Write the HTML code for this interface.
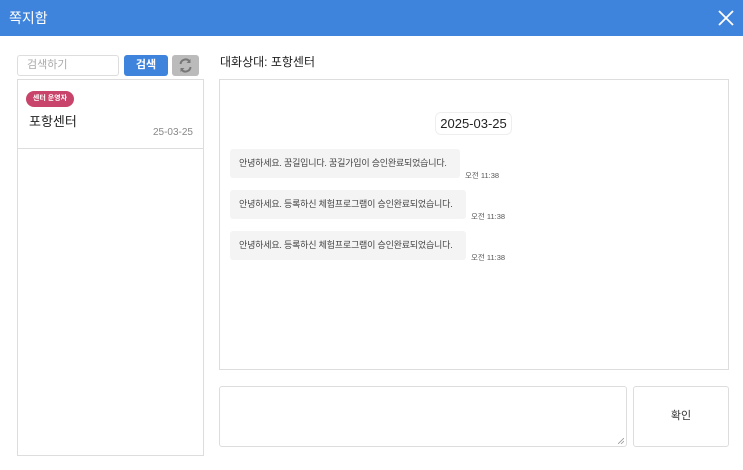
<!DOCTYPE html>
<html><head><meta charset="utf-8"><style>
*{box-sizing:border-box;margin:0;padding:0}
body{width:743px;height:470px;background:#fff;font-family:"Liberation Sans","Noto Sans CJK KR",sans-serif;position:relative;overflow:hidden;color:#333}
.hdr{position:absolute;left:0;top:0;width:743px;height:36px;background:#3f84dc;color:#fff;font-size:14px;line-height:36px;padding-left:9px}
.x{position:absolute;right:9px;top:10px;width:16px;height:16px}
.abs{position:absolute;white-space:nowrap}
.inp{left:17px;top:55px;width:102px;height:21px;border:1px solid #ddd;border-radius:3px;font-size:11px;color:#aaa;padding-left:9px;line-height:19px}
.btn{left:124px;top:55px;width:44px;height:21px;background:#3f84dc;border-radius:3px;color:#fff;font-size:11px;text-align:center;line-height:21px;font-weight:bold}
.ref{left:172px;top:55px;width:27px;height:21px;background:#bbb;border-radius:3px}
.list{left:17px;top:79px;width:187px;height:377px;border:1px solid #ddd}
.item{position:absolute;left:0;top:0;width:185px;height:69px;border-bottom:1px solid #ddd}
.badge{position:absolute;left:8px;top:11px;width:48px;height:16px;background:#c9446a;border-radius:8px;color:#fff;font-size:7px;font-weight:bold;text-align:center;line-height:16px}
.name{position:absolute;left:11px;top:31px;font-size:13px;color:#222}
.dt{position:absolute;right:10px;top:47px;font-size:10px;color:#888}
.lbl{left:220px;top:53px;font-size:12px;color:#222}
.chat{left:219px;top:79px;width:510px;height:291px;border:1px solid #ddd}
.pill{left:435px;top:112px;width:77px;height:23px;border:1px solid #eee;border-radius:6px;font-size:13px;text-align:center;line-height:21px;color:#222}
.bub{left:230px;height:29px;background:#f4f4f4;border-radius:3px;font-size:9px;color:#444;line-height:29px;padding-left:9px;letter-spacing:-0.2px}
.tm{font-size:7.5px;color:#555}
.ta{left:219px;top:386px;width:408px;height:61px;border:1px solid #ddd;border-radius:3px}
.ok{left:633px;top:386px;width:96px;height:61px;border:1px solid #ddd;border-radius:3px;font-size:11px;text-align:center;line-height:59px;color:#333}
</style></head><body>
<div class="hdr">쪽지함<svg class="x" viewBox="0 0 16 16"><path d="M1 1L15 15M15 1L1 15" stroke="#fff" stroke-width="1.8"/></svg></div>
<div class="abs inp">검색하기</div>
<div class="abs btn">검색</div>
<div class="abs ref"><svg width="27" height="21" viewBox="0 0 27 21"><path d="M8.5 9a5 5 0 0 1 9-2.5M18.5 12a5 5 0 0 1-9 2.5" stroke="#777" stroke-width="2" fill="none"/><path d="M18.5 4v4h-4zM8.5 17v-4h4z" fill="#777"/></svg></div>
<div class="abs list"><div class="item"><div class="badge">센터 운영자</div><div class="name">포항센터</div><div class="dt">25-03-25</div></div></div>
<div class="abs lbl">대화상대: 포항센터</div>
<div class="abs chat"></div>
<div class="abs pill">2025-03-25</div>
<div class="abs bub" style="top:149px;width:230px">안녕하세요. 꿈길입니다. 꿈길가입이 승인완료되었습니다.</div>
<div class="abs tm" style="left:465px;top:170px">오전 11:38</div>
<div class="abs bub" style="top:190px;width:236px">안녕하세요. 등록하신 체험프로그램이 승인완료되었습니다.</div>
<div class="abs tm" style="left:471px;top:211px">오전 11:38</div>
<div class="abs bub" style="top:231px;width:236px">안녕하세요. 등록하신 체험프로그램이 승인완료되었습니다.</div>
<div class="abs tm" style="left:471px;top:252px">오전 11:38</div>
<div class="abs ta"><svg style="position:absolute;right:2px;bottom:2px" width="6" height="6"><path d="M0 6L6 0M3 6L6 3" stroke="#999" stroke-width="0.8"/></svg></div>
<div class="abs ok">확인</div>
</body></html>
